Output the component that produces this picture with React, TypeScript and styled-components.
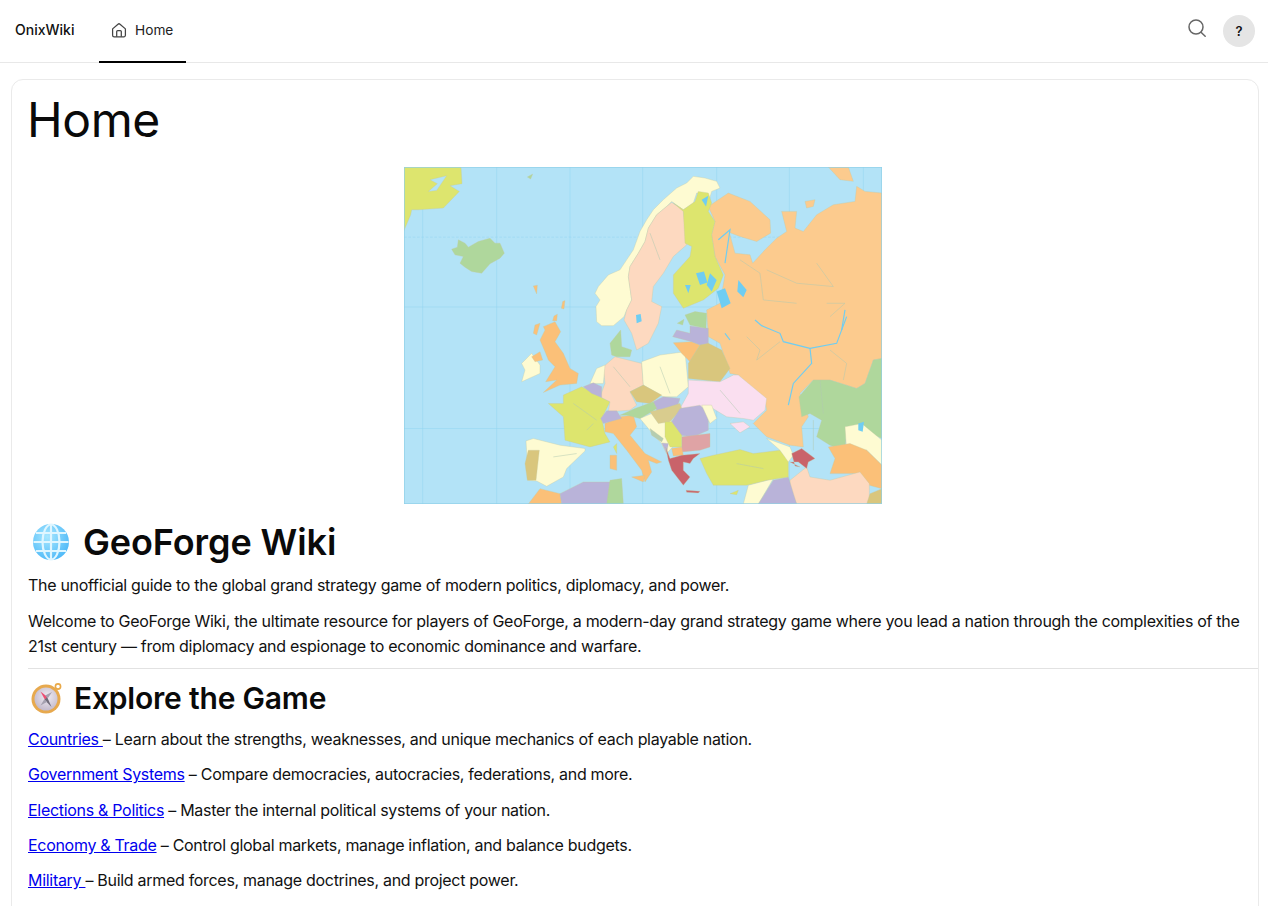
import styled, { createGlobalStyle } from 'styled-components';

const GlobalStyle = createGlobalStyle`
	html, body {
		margin: 0;
		height: 100%;
		overflow: hidden;
		background: #fff;
	}
	body {
		font-family: Inter, "Noto Sans", sans-serif;
		color: #0a0a0a;
	}
`;

const Page = styled.div`
	display: flex;
	flex-direction: column;
	height: 906px;
	overflow: hidden;
`;

const Header = styled.header`
	display: flex;
	align-items: stretch;
	flex: 0 0 63px;
	box-sizing: border-box;
	height: 63px;
	border-bottom: 1px solid #e8e8e8;
`;

const Brand = styled.div`
	display: flex;
	align-items: center;
	width: 99px;
	padding: 0 0 4px 15px;
	box-sizing: border-box;
	font-size: 14px;
	font-weight: 500;
	color: #111;
`;

const Tab = styled.a`
	display: flex;
	align-items: center;
	gap: 8px;
	width: 87px;
	height: 63px;
	box-sizing: border-box;
	padding: 0 0 2px 12px;
	border-bottom: 2px solid #000;
	font-size: 13.7px;
	color: #222;
`;

const Tools = styled.div`
	display: flex;
	align-items: center;
	gap: 16px;
	margin-left: auto;
	padding: 0 13px 4px 0;
`;

const SearchButton = styled.span`
	display: flex;
	margin-top: -3px;
`;

const HelpButton = styled.span`
	display: flex;
	align-items: center;
	justify-content: center;
	width: 32px;
	height: 32px;
	border-radius: 50%;
	background: #e5e5e5;
	font-size: 13px;
	font-weight: 600;
	color: #111;
	margin-top: 3px;
`;

const Card = styled.main`
	flex: 0 0 auto;
	height: 1200px;
	box-sizing: border-box;
	margin: 16px 9px 0 11px;
	padding: 0 0 0 16px;
	border: 1px solid #eaeaea;
	border-radius: 12px;
`;

const Title = styled.h1`
	margin: 8px 0 0 -1px;
	font-size: 48px;
	line-height: 64px;
	font-weight: 400;
	letter-spacing: -0.4px;
	color: #0a0a0a;
`;

const MapFigure = styled.div`
	display: flex;
	justify-content: center;
	margin: 15px 0 0;

	svg {
		display: block;
		width: 478px;
		height: 337px;
	}
`;

const Heading = styled.h2<{ $size: number; $gap: number; $spacing: number }>`
	display: flex;
	align-items: center;
	gap: ${({ $gap }) => $gap}px;
	margin: 0;
	font-size: ${({ $size }) => $size}px;
	font-weight: 600;
	line-height: 40px;
	letter-spacing: ${({ $spacing }) => $spacing}px;
	color: #0a0a0a;
`;

const MainHeading = styled(Heading)`
	margin-top: 18px;
	padding-left: 4px;
`;

const SubHeading = styled(Heading)`
	margin-top: 9px;
	padding-left: 3px;
`;

const Text = styled.p`
	margin: 11px 0 0;
	font-size: 16px;
	line-height: 25px;
	letter-spacing: -0.3px;
	color: #111;
`;

const Lead = styled(Text)`
	margin-top: 11px;
`;

const Rule = styled.hr`
	margin: 9px 0 0;
	border: 0;
	border-top: 1px solid #e2e2e2;
`;

const Item = styled(Text)`
	margin-top: 10.3px;

	a {
		color: #0000ee;
		text-decoration: underline;
	}
`;

const FirstItem = styled(Item)`
	margin-top: 9px;
`;

function HomeIcon() {
	return (
		<svg width="16" height="16" viewBox="0 0 16 16" fill="none" stroke="#444" strokeWidth="1.25" strokeLinejoin="round">
			<path d="M1.6 6.9 7 2.2a1.5 1.5 0 0 1 2 0l5.4 4.7v6.3a1.6 1.6 0 0 1-1.6 1.6H3.2a1.6 1.6 0 0 1-1.6-1.6z" />
			<path d="M5.7 14.7V9.6a1 1 0 0 1 1-1h2.6a1 1 0 0 1 1 1v5.1" />
		</svg>
	);
}

function SearchIcon() {
	return (
		<svg width="20" height="20" viewBox="0 0 20 20" fill="none" stroke="#666" strokeWidth="1.5" strokeLinecap="round">
			<circle cx="9" cy="9" r="7" />
			<path d="m14 14.2 4.2 4" />
		</svg>
	);
}

function GlobeEmoji() {
	return (
		<svg width="38" height="38" viewBox="0 0 38 38" fill="none">
			<defs>
				<radialGradient id="globe" cx="40%" cy="35%" r="70%">
					<stop offset="0" stopColor="#a8e8ff" />
					<stop offset="1" stopColor="#4cb8f8" />
				</radialGradient>
			</defs>
			<circle cx="19" cy="19" r="18" fill="url(#globe)" />
			<g stroke="#dff6ff" strokeWidth="2.2">
				<ellipse cx="19" cy="19" rx="8.5" ry="17.5" />
				<path d="M19 1.5v35M1.5 19h35M4 10h30M4 28h30" />
			</g>
		</svg>
	);
}

function CompassEmoji() {
	return (
		<svg width="32" height="32" viewBox="0 0 32 32" fill="none">
			<defs>
				<radialGradient id="dial" cx="55%" cy="40%" r="70%">
					<stop offset="0" stopColor="#f0ecf3" />
					<stop offset="1" stopColor="#bdb3c6" />
				</radialGradient>
			</defs>
			<circle cx="27" cy="4.5" r="2.6" stroke="#e9a948" strokeWidth="1.6" />
			<circle cx="15" cy="17" r="14.5" fill="#e7a94e" />
			<circle cx="15" cy="17" r="11.5" fill="url(#dial)" />
			<path d="m9.5 9.5 7 5.5-2.6 2.8z" fill="#ee4f74" />
			<path d="m20.5 25-7-7.2 2.6-2.8z" fill="#6f6a78" />
			<path d="m21 10-4 6-3-2.5zM9.5 23.5l3.8-6.2 3 2.5z" fill="#a5a1b0" />
		</svg>
	);
}

const lands: [string, string][] = [
	['#dde56e', '12,22 183,22 186,72 150,78 178,95 130,145 55,150 35,150 32,165 12,212'],
	['#b3e3f7', '90,60 140,48 110,92 85,95 112,72'],
	['#afd79c', '155,268 172,262 175,240 195,250 205,262 235,245 270,235 285,250 300,250 313,280 300,295 270,312 245,340 215,335 195,322 180,310 190,290 165,285'],
	['#afd79c', '382,52 398,43 392,58'],
	['#fbc078', '400,378 412,376 410,402'],
	['#fbc078', '488,425 495,422 492,447 484,445'],
	['#fbc078', '462,468 472,463 470,482 458,482'],
	['#fefbd2', '590,485 588,440 600,420 585,400 595,380 625,345 660,330 680,300 700,270 720,215 740,180 760,150 790,120 830,85 860,70 880,50 915,55 950,65 960,85 935,95 925,130 905,100 890,100 880,130 850,150 815,125 800,140 770,165 745,205 735,245 715,280 690,320 685,350 695,420 680,450 672,470 640,497 605,497'],
	['#fdd9c0', '815,128 850,150 860,255 820,290 790,340 760,380 755,425 785,440 775,490 745,550 710,570 695,520 672,480 680,450 695,420 685,350 690,320 715,280 735,245 745,205 770,165 800,140'],
	['#fccb8e', '925,140 985,100 1050,125 1110,180 1112,220 1070,245 1020,230 988,218 1005,280 1050,285 1058,310 1095,270 1130,235 1160,215 1145,155 1190,155 1185,205 1210,215 1250,165 1300,135 1365,125 1370,80 1395,95 1446,100 1446,595 1420,600 1395,670 1370,685 1290,660 1240,660 1200,700 1225,770 1205,800 1210,860 1170,855 1100,830 1060,790 1100,750 1095,720 1015,645 990,640 960,550 925,530 920,450 960,430 975,345 945,290 935,225 945,185'],
	['#fccb8e', '1285,22 1345,22 1360,65 1320,60'],
	['#fccb8e', '1215,125 1245,120 1240,140 1220,145'],
	['#dde56e', '820,130 850,150 885,125 895,95 925,100 935,130 925,155 945,185 935,225 945,290 970,345 955,385 910,420 850,445 820,400 820,345 870,290 875,260 855,250 850,155'],
	['#afd79c', '1197,710 1240,660 1290,660 1370,685 1395,670 1420,600 1446,595 1446,835 1400,815 1340,800 1335,870 1290,855 1250,830 1265,780 1230,760 1205,770'],
	['#fefbd2', '1335,800 1385,790 1446,840 1446,915 1400,870 1340,870'],
	['#fbc078', '1285,860 1350,850 1400,870 1446,915 1446,985 1408,975 1375,940 1290,940 1305,895'],
	['#fdd9c0', '1170,960 1220,920 1230,950 1290,960 1380,935 1408,970 1408,1031 1190,1031 1170,990'],
	['#d9c67d', '1410,1000 1446,985 1446,1031 1400,1031'],
	['#fefbd2', '1030,1031 1045,975 1120,955 1075,1031'],
	['#b9b3d9', '1075,1031 1120,960 1165,950 1190,1031'],
	['#dde56e', '900,895 940,885 1020,868 1060,880 1140,870 1165,900 1165,950 1100,960 1040,975 940,975 920,940'],
	['#fefbd2', '1100,835 1170,860 1180,885 1165,905 1140,870'],
	['#c9636a', '1175,880 1205,865 1245,895 1225,905 1220,925 1195,905 1170,905 1200,920 1185,917'],
	['#fbc078', '430,500 465,485 482,515 465,545 490,580 510,625 535,640 530,670 480,675 430,697 470,660 437,665 465,620 445,600 435,575 420,540 435,510'],
	['#fbc078', '405,495 420,490 410,525 400,520'],
	['#fefbd2', '365,610 395,580 420,615 420,640 365,665 375,630'],
	['#fbc078', '395,590 420,575 428,600 405,605'],
	['#dde56e', '445,730 490,730 490,705 545,680 600,710 630,725 605,775 615,820 630,845 570,860 495,840 490,770'],
	['#fefbd2', '378,842 400,835 480,855 555,865 555,872 500,925 490,950 440,978 410,962 385,960'],
	['#d9c67d', '385,870 418,870 408,960 382,960 375,910'],
	['#fbc078', '615,790 660,770 700,765 710,800 690,825 735,880 785,905 770,910 745,900 755,935 735,965 725,930 680,870 640,820 615,815'],
	['#fbc078', '695,950 735,945 730,965'],
	['#fbc078', '630,885 650,885 650,930 630,925'],
	['#dde56e', '640,860 650,850 650,880'],
	['#fdd9c0', '610,620 645,590 725,610 730,675 690,695 710,735 690,750 625,755 630,725 600,710 615,670'],
	['#fefbd2', '570,670 590,625 615,615 610,670'],
	['#b9b3d9', '550,680 580,668 605,680 605,712 575,700'],
	['#afd79c', '630,550 662,510 665,560 695,570 690,590 650,590 635,585'],
	['#fefbd2', '725,605 780,585 855,575 865,680 830,710 790,710 730,675'],
	['#fbc078', '820,548 875,545 900,555 870,605 845,580'],
	['#b9b3d9', '818,530 830,510 870,520 870,498 925,505 925,555 900,555 875,545'],
	['#afd79c', '855,465 885,455 920,460 918,505 870,495'],
	['#afd79c', '832,490 852,478 848,495'],
	['#d9c67d', '900,555 925,550 965,570 990,625 960,665 865,655 865,610'],
	['#fadff0', '865,660 960,665 1000,645 1015,645 1100,715 1095,750 1060,780 1030,775 980,770 930,740 840,745 865,700'],
	['#fadff0', '990,790 1030,785 1050,800 1020,818'],
	['#fefbd2', '720,775 790,745 815,785 845,830 800,880 785,850 745,805'],
	['#d9c67d', '690,695 730,675 785,705 750,730 710,725'],
	['#b9b3d9', '760,725 790,710 840,715 830,745 770,750'],
	['#afd79c', '660,765 705,745 760,725 770,745 755,755 720,775 680,765'],
	['#d9cc8e', '750,755 790,745 840,730 845,745 810,785 775,790'],
	['#b9b3d9', '840,745 900,735 925,760 925,810 880,830 840,825 815,785'],
	['#fefbd2', '905,735 935,735 950,775 930,790'],
	['#dfa3a5', '845,830 930,820 930,860 900,870 845,875'],
	['#dde56e', '795,785 815,785 845,825 845,860 810,860 795,830'],
	['#b5cdb0', '750,805 790,835 785,845 755,825'],
	['#b9b3d9', '602,775 620,752 650,752 665,775 610,790'],
	['#b9b3d9', '785,848 805,850 800,880'],
	['#fbc078', '815,865 845,860 850,885 820,887'],
	['#c9636a', '797,860 810,895 845,885 900,880 880,895 870,910 850,905 850,930 870,950 850,975 815,930 805,900'],
	['#c9636a', '858,990 900,993 895,998 860,996'],
	['#fbc078', '385,1031 420,985 480,1000 485,1031'],
	['#b9b3d9', '480,1000 550,965 630,965 625,1031 485,1031'],
	['#afd79c', '630,960 665,955 670,1031 620,1031'],
	['#dde56e', '990,1000 1015,990 1010,1003'],
];

const lakes: string[] = [
	'950,395 975,385 992,430 965,445',
	'1015,360 1040,390 1030,412 1012,395',
	'888,340 912,335 922,368 900,375',
	'930,340 950,360 935,395 920,375',
	'855,375 872,375 865,400',
	'905,120 925,108 918,140',
	'1375,790 1392,785 1388,815 1375,810',
	'708,465 722,462 725,484 710,490',
];

const rivers: string[] = [
	'1065,480 1085,497 1140,520 1150,545 1230,565 1310,550 1340,470',
	'1230,565 1235,610 1180,670 1165,735',
	'975,520 990,540',
	'1335,450 1325,510',
	'955,240 990,210 975,310',
];

const streams: string[] = [
	'1040,530 1080,570 1070,600 1140,545',
	'1100,330 1190,370 1300,380 1250,310',
	'1280,430 1335,430 1290,470',
	'1020,300 1080,340 1090,420 1190,430',
	'640,620 690,680',
	'520,730 590,780',
	'960,690 1020,760',
	'1260,660 1270,760',
	'1290,570 1340,610 1330,660',
	'780,620 810,700',
	'750,220 780,300',
	'460,890 530,880',
	'1240,780 1240,870',
	'560,810 580,790',
	'1010,910 1090,925',
];

const MapImage = () => (
	<svg viewBox="12 22 1434 1009" preserveAspectRatio="none">
		<rect x="12" y="22" width="1434" height="1009" fill="#b3e3f7" />
		<g stroke="#93d5f0" strokeWidth="1.5">
			<path d="M68 22v1009M290 22v1009M510 22v1009M728 22v1009M950 22v1009M1168 22v1009M1390 22v1009M12 441h1434M12 805h1434" />
			<path d="M12 232h1434" strokeDasharray="8 5" />
		</g>
		{lands.map(([fill, points], i) => (
			<polygon key={i} points={points} fill={fill} stroke="#c2c9a2" strokeWidth="1" strokeLinejoin="round" />
		))}
		{lakes.map((points, i) => (
			<polygon key={i} points={points} fill="#6fcdf2" />
		))}
		<g fill="none" stroke="#b0c8b0" strokeWidth="1.5">
			{streams.map((points, i) => (
				<polyline key={i} points={points} />
			))}
		</g>
		<g fill="none" stroke="#6fcdf2" strokeWidth="3.5">
			{rivers.map((points, i) => (
				<polyline key={i} points={points} />
			))}
		</g>
		<rect x="12.5" y="22.5" width="1433" height="1008" fill="none" stroke="#8fd0e8" strokeWidth="3" />
	</svg>
);

export default function App() {
	return (
		<>
			<GlobalStyle />
			<Page>
				<Header>
					<Brand>OnixWiki</Brand>
					<Tab>
						<HomeIcon />
						Home
					</Tab>
					<Tools>
						<SearchButton>
							<SearchIcon />
						</SearchButton>
						<HelpButton>?</HelpButton>
					</Tools>
				</Header>
				<Card>
					<Title>Home</Title>
					<MapFigure>
						<MapImage />
					</MapFigure>
					<MainHeading $size={36} $gap={13} $spacing={-0.1}>
						<GlobeEmoji />
						GeoForge Wiki
					</MainHeading>
					<Lead>The unofficial guide to the global grand strategy game of modern politics, diplomacy, and power.</Lead>
					<Text>
						Welcome to GeoForge Wiki, the ultimate resource for players of GeoForge, a modern-day grand strategy game where you lead a nation through the complexities of the 21st century — from diplomacy and espionage to economic dominance and warfare.
					</Text>
					<Rule />
					<SubHeading $size={30} $gap={11} $spacing={-0.2}>
						<CompassEmoji />
						Explore the Game
					</SubHeading>
					<FirstItem>
						<a href="#countries">Countries </a>– Learn about the strengths, weaknesses, and unique mechanics of each playable nation.
					</FirstItem>
					<Item>
						<a href="#government">Government Systems</a> – Compare democracies, autocracies, federations, and more.
					</Item>
					<Item>
						<a href="#elections">Elections &amp; Politics</a> – Master the internal political systems of your nation.
					</Item>
					<Item>
						<a href="#economy">Economy &amp; Trade</a> – Control global markets, manage inflation, and balance budgets.
					</Item>
					<Item>
						<a href="#military">Military </a>– Build armed forces, manage doctrines, and project power.
					</Item>
				</Card>
			</Page>
		</>
	);
}
